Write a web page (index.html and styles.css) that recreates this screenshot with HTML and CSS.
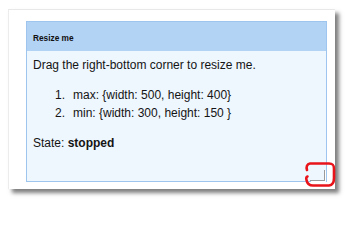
FILE: index.html
```html
<!DOCTYPE html>
<html>
<head>
<meta charset="utf-8">
<link rel="stylesheet" href="styles.css">
</head>
<body>
<div class="card">
  <div class="panel">
    <div class="panel-header">Resize me</div>
    <div class="panel-body">
      <p class="intro">Drag the right-bottom corner to resize me.</p>
      <ol class="limits">
        <li><span class="num">1.</span>max: {width: 500, height: 400}</li>
        <li><span class="num">2.</span>min: {width: 300, height: 150 }</li>
      </ol>
      <p class="state">State: <b>stopped</b></p>
    </div>
    <div class="grip"></div>
  </div>
  <svg class="mark" width="36" height="30" viewBox="0 0 36 30">
    <path d="M4 9 C3 6 4 3 7 2.5 L26 2.5 C30 2.5 31 4 31 8 L31 17 C31 21 30 24 26 24.5 L10 24.5 C6 24.5 4 22 3.5 19 C3 17 3 16 4.5 15.5" fill="none" stroke="#e8141a" stroke-width="2.6" stroke-linecap="round" stroke-linejoin="round"/>
  </svg>
</div>
</body>
</html>
```

FILE: styles.css
```css
html, body {
  margin: 0;
  padding: 0;
  background: #ffffff;
}
body {
  width: 350px;
  height: 202px;
  overflow: hidden;
  font-family: "Liberation Sans", Arial, sans-serif;
  color: #141414;
}
.card {
  position: relative;
  box-sizing: border-box;
  margin: 9px 0 0 8px;
  width: 327px;
  height: 180px;
  padding: 11px 0 0 17px;
  background: #ffffff;
  border-top: 1px solid #e8e8e8;
  border-left: 1px solid #ececec;
  box-shadow: 4px 4px 4px rgba(0, 0, 0, 0.5);
}
.panel {
  position: relative;
  box-sizing: border-box;
  width: 301px;
  height: 161px;
  border: 1px solid #9dc5ee;
  background: #eef6fe;
  display: flex;
  flex-direction: column;
}
.panel-header {
  height: 29px;
  flex: none;
  background: #b3d3f5;
  display: flex;
  align-items: center;
  padding: 2px 0 0 6px;
  box-sizing: border-box;
  font-size: 8.3px;
  font-weight: bold;
  color: #101010;
}
.panel-body {
  padding: 5px 0 0 6px;
  font-size: 12px;
  line-height: 18px;
}
.intro {
  margin: 0 0 12px;
}
.limits {
  list-style: none;
  margin: 0 0 12px;
  padding: 0 0 0 22px;
}
.limits li {
  display: flex;
}
.num {
  width: 18px;
  flex: none;
}
.state {
  margin: 0;
}
.grip {
  position: absolute;
  right: 1px;
  bottom: 0px;
  width: 14px;
  height: 10px;
  border-right: 1px solid #9a9a9a;
  border-bottom: 1px solid #9a9a9a;
  box-shadow: 1px 1px 0 #ffffff;
}
.mark {
  position: absolute;
  left: 294px;
  top: 151px;
}
```
